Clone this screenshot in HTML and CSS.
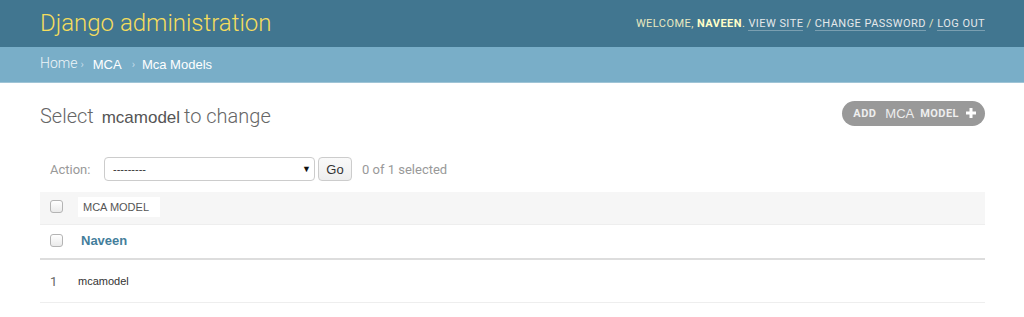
FILE: index.html
```html
<!DOCTYPE html>
<html>
<head>
<meta charset="utf-8">
<link rel="stylesheet" href="styles.css">
</head>
<body>
<div class="header">
  <div class="branding">Django administration</div>
  <div class="user-tools">WELCOME, <strong>NAVEEN</strong>. <a href="#">VIEW SITE</a> / <a href="#">CHANGE PASSWORD</a> / <a href="#">LOG OUT</a></div>
</div>
<div class="breadcrumbs"><span class="home">Home</span><span class="sep">›</span><span class="crumb">MCA</span><span class="sep sep2">›</span><span class="crumb">Mca Models</span></div>
<div class="content">
  <div class="title-row">
    <h1>Select <span class="model">mcamodel</span> to change</h1>
    <a class="addlink" href="#"><span class="b">ADD</span><span class="m">MCA</span><span class="b b2">MODEL</span><svg width="10" height="10" viewBox="0 0 10 10"><path d="M3.5 0h3v3.5H10v3H6.5V10h-3V6.5H0v-3h3.5z" fill="#fff"/></svg></a>
  </div>
  <div class="actions">
    <span class="label">Action:</span>
    <div class="select"><span>---------</span><span class="arrow">▼</span></div>
    <button class="go">Go</button>
    <span class="count">0 of 1 selected</span>
  </div>
  <div class="table">
    <div class="row head"><span class="cb"></span><span class="colname">MCA MODEL</span></div>
    <div class="row item"><span class="cb"></span><a class="name" href="#">Naveen</a></div>
    <div class="row paginator"><span class="num">1</span><span class="pname">mcamodel</span></div>
  </div>
</div>
</body>
</html>
```
FILE: styles.css
```css
body {
  margin: 0;
  font-family: Roboto, "Liberation Sans", sans-serif;
  background: #fff;
  color: #333;
}
.header {
  background: #417690;
  height: 47px;
  padding: 0 39px 0 40px;
  display: flex;
  align-items: center;
  justify-content: space-between;
  box-sizing: border-box;
}
.branding {
  color: #f5dd5d;
  font-size: 24px;
  font-weight: 300;
  margin-top: -2px;
}
.user-tools {
  color: #e8e8c0;
  font-size: 11px;
  letter-spacing: 0.45px;
}
.user-tools strong {
  font-weight: 700;
  color: #ffffc8;
}
.user-tools a {
  color: #e4e8ea;
  text-decoration: none;
  border-bottom: 1px solid rgba(255,255,255,0.3);
}
.breadcrumbs {
  background: #79aec8;
  height: 36px;
  padding: 0 40px;
  display: flex;
  align-items: center;
  color: #fff;
  font-size: 13px;
  box-sizing: border-box;
  border-bottom: 1px solid #9fc4d6;
}
.home {
  color: #eef5f9;
  font-size: 14px;
  font-weight: 300;
  margin-top: -3px;
}
.sep {
  color: #c4dce8;
  font-size: 11px;
  margin: 0 9px 0 3px;
}
.sep2 {
  margin: 0 7px 0 10px;
}
.crumb {
  font-family: "Liberation Sans", Arial, sans-serif;
}
.content {
  padding: 0 39px 0 40px;
}
.title-row {
  display: flex;
  justify-content: space-between;
  align-items: center;
  height: 66px;
}
h1 {
  margin: 0;
  font-size: 20px;
  font-weight: 300;
  color: #666;
}
h1 .model {
  font-family: "Liberation Sans", Arial, sans-serif;
  font-size: 17px;
  font-weight: 400;
  color: #555;
  margin: 0 -1px 0 3px;
}
.addlink {
  display: flex;
  align-items: center;
  background: #999;
  border-radius: 15px;
  height: 25px;
  padding: 0 9px 0 11px;
  color: #fff;
  text-decoration: none;
  margin-top: -6px;
}
.addlink .b {
  font-size: 11px;
  font-weight: 700;
  letter-spacing: 0.45px;
  color: #eee;
}
.addlink .m {
  font-size: 13px;
  color: #eee;
  font-family: "Liberation Sans", Arial, sans-serif;
  margin: 0 6px 0 9px;
}
.addlink svg { margin-left: 7px; }
.actions {
  display: flex;
  align-items: center;
  height: 44px;
  padding-left: 10px;
  margin-top: -2px;
  font-size: 13px;
}
.label {
  color: #999;
  width: 54px;
}
.select {
  width: 211px;
  height: 24px;
  box-sizing: border-box;
  border: 1px solid #ccc;
  border-radius: 4px;
  display: flex;
  justify-content: space-between;
  align-items: center;
  padding: 0 3px 0 8px;
  font-family: "Liberation Sans", Arial, sans-serif;
  font-size: 11px;
  color: #333;
}
.select .arrow {
  font-size: 9px;
  color: #111;
}
.go {
  margin-left: 3px;
  height: 24px;
  width: 34px;
  border: 1px solid #ccc;
  border-radius: 4px;
  background: linear-gradient(#fafafa, #eee);
  font-family: "Liberation Sans", Arial, sans-serif;
  font-size: 13px;
  color: #333;
  padding: 0;
}
.count {
  color: #999;
  margin-left: 10px;
}
.table {
  margin-top: 1px;
}
.row {
  display: flex;
  align-items: center;
  padding-left: 10px;
  font-size: 13px;
}
.head {
  background: #f6f6f6;
  height: 33px;
  box-sizing: border-box;
  border-bottom: 1px solid #eee;
}
.cb {
  width: 11px;
  height: 11px;
  border: 1px solid #b4b4b4;
  border-radius: 3px;
  background: linear-gradient(#fff, #eaeaea);
  display: inline-block;
  margin-right: 15px;
  margin-top: -3px;
}
.colname {
  background: #fff;
  font-size: 11px;
  font-family: "Liberation Sans", Arial, sans-serif;
  color: #555;
  padding: 4px 6px 4px 5px;
  height: 12px;
  margin-top: -3px;
  width: 71px;
}
.item {
  height: 35px;
  box-sizing: border-box;
  border-bottom: 2px solid #ddd;
}
.name {
  color: #447e9b;
  font-weight: 700;
  font-size: 13px;
  text-decoration: none;
  font-family: "Liberation Sans", Arial, sans-serif;
  margin: -3px 0 0 3px;
}
.paginator {
  height: 43px;
  box-sizing: border-box;
  border-bottom: 1px solid #eee;
}
.num {
  color: #666;
  width: 28px;
  font-size: 13px;
}
.pname {
  font-family: "Liberation Sans", Arial, sans-serif;
  font-size: 11px;
  color: #333;
}
```
